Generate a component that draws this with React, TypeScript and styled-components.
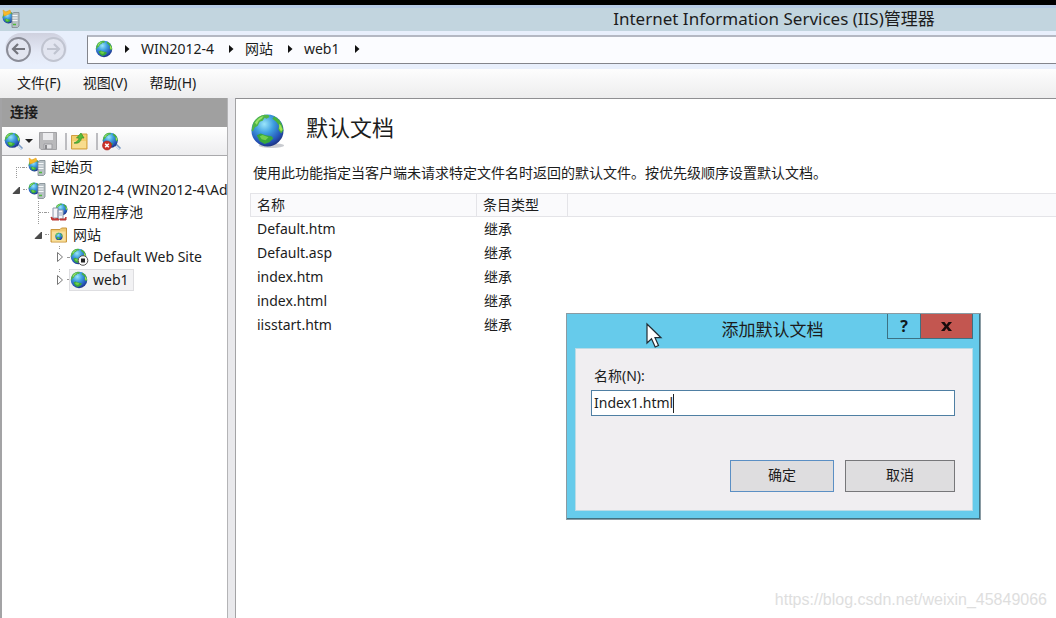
import React, { useId } from "react";
import styled, { createGlobalStyle, css } from "styled-components";

const GlobalStyle = createGlobalStyle`
  * { box-sizing: border-box; }
  body {
    margin: 0;
    background: #fff;
    color: #1c1c1c;
    font: 14px/20px "Noto Sans", "Noto Sans CJK SC", sans-serif;
  }
  button, input { font: inherit; color: inherit; }
  button { border: 0; padding: 0; background: none; white-space: nowrap; }
  svg { display: block; flex: none; overflow: visible; }
`;

const Page = styled.div`
  position: relative;
  min-height: 100vh;
  display: flex;
  flex-direction: column;
  border-top: 5px solid #000;
  overflow: hidden;
`;

const TitleBar = styled.header`
  height: 26px;
  display: flex;
  align-items: center;
  padding: 0 0 2px 2px;
  background: #c2d5df;
  border-top: 3px solid #b7cbe5;
`;

const AppTitle = styled.h1`
  flex: 1;
  margin: 0;
  padding-left: 472px;
  font-size: 17px;
  line-height: 20px;
  font-weight: 400;
  text-align: center;
  white-space: nowrap;
`;

const NavBar = styled.nav`
  height: 38px;
  display: flex;
  align-items: center;
  padding-bottom: 2px;
  background: #e8effc;
`;

const NavButtons = styled.div`
  display: flex;
  align-items: center;
  gap: 10px;
  width: 62px;
  height: 32px;
  margin: 0 20px 0 5px;
  padding-left: 1px;
  border-radius: 16px;
  background: linear-gradient(#cfd1df, #e4e9f6 60%, #e8effc);
`;

const RoundButton = styled.button<{ $dim?: boolean }>`
  width: 25px;
  height: 25px;
  display: grid;
  place-items: center;
  border-radius: 50%;
  border: 2px solid ${(p) => (p.$dim ? "#c0c4d0" : "#8b8d98")};
  color: ${(p) => (p.$dim ? "#c0c4d0" : "#74757d")};
  background: #e2e5f0;
`;

const AddressBar = styled.div`
  flex: 1;
  height: 29px;
  display: flex;
  align-items: center;
  gap: 11px;
  padding: 0 0 2px 7px;
  border: 1px solid #83858c;
  border-top: 2px solid #b4b8c3;
  border-right: 0;
  background: #fbfcff;
`;

const Crumb = styled.button`
  padding-right: 3px;
`;

const MenuBar = styled.div`
  height: 29px;
  display: flex;
  align-items: center;
  gap: 22px;
  padding: 0 0 2px 17px;
  background: linear-gradient(#fdfdfd, #ededee);
`;

const Body = styled.div`
  flex: 1;
  display: flex;
`;

const Sidebar = styled.aside`
  width: 228px;
  flex: none;
  border-left: 2px solid #a3a3a5;
  border-right: 1px solid #b4b4b6;
  background: #fff;
  overflow: hidden;
`;

const PanelTitle = styled.h2`
  margin: 0;
  padding: 4px 8px 5px;
  font-size: 14px;
  line-height: 20px;
  font-weight: 700;
  background: #a0a0a0;
`;

const ToolBar = styled.div`
  height: 29px;
  display: flex;
  align-items: center;
  padding-left: 2px;
  background: linear-gradient(#fff, #ededef);
  border-bottom: 1px solid #a9a9ac;
`;

const Divider = styled.span`
  width: 2px;
  height: 17px;
  margin: 0 4px 0 8px;
  background: #bcbcc0;
`;

const Caret = styled.span`
  margin: 0 6px 0 2px;
  border: 4px solid transparent;
  border-top-color: #222;
  border-bottom: 0;
`;

const Tree = styled.ul`
  height: 135px;
  margin: 0;
  padding: 0;
  list-style: none;
  display: grid;
  grid-auto-rows: 1fr;
`;

const TreeRow = styled.li<{ $level: number }>`
  display: flex;
  align-items: center;
  padding-left: ${(p) => 7 + p.$level * 22}px;
`;

const Joint = styled.span<{ $from: "middle" | "top" }>`
  align-self: stretch;
  width: 7px;
  margin-left: 7px;
  display: flex;
  align-items: center;
  border-left: 1px dotted #999;
  ${(p) =>
    p.$from === "middle" &&
    css`
      border-left: 0;
      background: repeating-linear-gradient(#999 0 1px, transparent 1px 2px) left bottom / 1px 50% no-repeat;
    `}
  &::before {
    content: "";
    flex: 1;
    border-top: 1px dotted #999;
  }
`;

const Toggle = styled.button<{ $stub?: boolean }>`
  align-self: stretch;
  width: 14px;
  display: grid;
  place-items: center;
  ${(p) =>
    p.$stub &&
    css`
      background: repeating-linear-gradient(#999 0 1px, transparent 1px 2px) 6px top / 1px 4px no-repeat;
    `}
`;

const Dash = styled.span<{ $short?: boolean }>`
  width: ${(p) => (p.$short ? 2 : 4)}px;
  flex: none;
  border-top: 1px dotted #999;
`;

const NodeButton = styled.button<{ $selected?: boolean }>`
  height: 22px;
  display: flex;
  align-items: center;
  gap: 5px;
  padding-right: 4px;
  border: 1px solid ${(p) => (p.$selected ? "#dedee1" : "transparent")};
  background: ${(p) => (p.$selected ? "#f2f2f4" : "transparent")};
`;

const Splitter = styled.div`
  width: 7px;
  flex: none;
  background: #e9e9ec;
`;

const Content = styled.main`
  flex: 1;
  min-width: 0;
  padding: 13px 0 0 14px;
  border-left: 1px solid #a3a3a5;
  border-top: 1px solid #8f8f92;
  background: #fff;
`;

const FeatureHead = styled.div`
  display: flex;
  align-items: center;
  gap: 21px;
  height: 36px;
`;

const FeatureTitle = styled.h2`
  margin: 0;
  padding-bottom: 6px;
  font-size: 22px;
  line-height: 30px;
  font-weight: 400;
`;

const Hint = styled.p`
  margin: 15px 0 10px 3px;
`;

const DocTable = styled.table`
  width: 100%;
  border-collapse: separate;
  border-spacing: 0;
  table-layout: fixed;
  th, td { height: 24px; padding: 0 0 0 7px; text-align: left; font-weight: 400; }
  th {
    padding-left: 6px;
    background: #fafafc;
    border: 1px solid #e4e4e8;
    border-left: 0;
  }
  th:first-child { border-left: 1px solid #e4e4e8; }
  th:last-child { border-right: 0; }
`;

const Col = styled.col<{ $w?: number }>`
  width: ${(p) => (p.$w ? `${p.$w}px` : "auto")};
`;

const Dialog = styled.section`
  position: absolute;
  left: 566px;
  top: 308px;
  width: 415px;
  padding: 0 6px 7px 8px;
  border: 1px solid #41707f;
  outline: 1px solid #8a9ba3;
  outline-offset: -1px;
  border-width: 1px 2px 2px 1px;
  background: #66cbeb;
`;

const DialogHead = styled.div`
  height: 34px;
  display: flex;
  align-items: flex-start;
`;

const DialogTitle = styled.h3`
  flex: 1;
  margin: 0;
  padding: 4px 0 0 83px;
  font-size: 17px;
  line-height: 24px;
  font-weight: 400;
  text-align: center;
`;

const CaptionButton = styled.button<{ $close?: boolean }>`
  width: ${(p) => (p.$close ? 53 : 33)}px;
  height: 25px;
  display: grid;
  place-items: center;
  font: 700 16px/20px "Open Sans", sans-serif;
  color: #10191d;
  border: 1px solid #3c7183;
  border-top: 0;
  border-right-width: ${(p) => (p.$close ? 1 : 0)}px;
  background: ${(p) => (p.$close ? "#c35650" : "#66cbeb")};
`;

const DialogForm = styled.form`
  display: flex;
  flex-direction: column;
  padding: 17px 17px 18px 15px;
  background: #f0eef1;
  border: 1px solid #b9dbe6;
`;

const FieldLabel = styled.label`
  padding: 0 0 4px 3px;
`;

const Field = styled.div`
  height: 26px;
  display: flex;
  align-items: center;
  padding-left: 2px;
  border: 1px solid #4f7fa3;
  background: #fff;
`;

const NameInput = styled.input`
  field-sizing: content;
  padding: 0;
  border: 0;
  outline: 0;
  background: none;
`;

const TextCursor = styled.span`
  width: 1px;
  height: 19px;
  background: #222;
`;

const Actions = styled.div`
  display: flex;
  justify-content: flex-end;
  gap: 11px;
  margin-top: 44px;
`;

const ActionButton = styled.button<{ $primary?: boolean }>`
  width: ${(p) => (p.$primary ? 104 : 110)}px;
  height: 32px;
  padding-bottom: 2px;
  border: 1px solid ${(p) => (p.$primary ? "#5b8fc4" : "#77777a")};
  background: #dedddf;
`;

const Pointer = styled.svg`
  position: absolute;
  left: 646px;
  top: 318px;
`;

const Watermark = styled.span`
  position: absolute;
  right: 9px;
  bottom: 8px;
  font: 16px/20px "Liberation Sans", sans-serif;
  color: #dedede;
`;

function GlobeShape() {
  const id = useId();
  return (
    <g>
      <defs>
        <radialGradient id={id} cx="0.4" cy="0.3" r="0.72">
          <stop offset="0" stopColor="#9be6fa" />
          <stop offset="0.4" stopColor="#3f9fe0" />
          <stop offset="0.8" stopColor="#2554b8" />
          <stop offset="1" stopColor="#1c3280" />
        </radialGradient>
      </defs>
      <circle cx="18" cy="18" r="16.5" fill={`url(#${id})`} />
      <path d="M2.500 13C4 7 9 2.500 15 1.700L19 2 20 4 17 6 15 5 13 8 10 9 8 13 5 15 3 19 1.700 18Z" fill="#4fb548" />
      <path d="M5 10Q8 4.500 14 3L12 6 9 8 7 12Z" fill="#9be26b" />
      <path d="M7 23L11 21 16 23 22 24 24 26 20 30 15 32 10 29Z" fill="#39a83c" />
      <path d="M10 24L13 22.500 19 25 16 28 12 27Z" fill="#72cf4c" />
      <path d="M25 3.300L30 7 33 12 34.300 18 32 21 29 17 30 13 27 9 23 6Z" fill="#48b23c" />
      <path d="M30 11L32 13 33.500 17 32 19 30 16Z" fill="#a5e554" />
    </g>
  );
}

function Globe({ size }: { size: number }) {
  return (
    <svg width={size} height={size} viewBox="0 0 36 36">
      <GlobeShape />
    </svg>
  );
}

function FeatureGlobe() {
  return (
    <svg width="35" height="35" viewBox="0 0 36 36">
      <ellipse cx="22" cy="33.5" rx="13" ry="2.5" fill="#c9cbd0" />
      <GlobeShape />
    </svg>
  );
}

function ServerIcon({ star }: { star?: boolean }) {
  return (
    <svg width="18" height="18" viewBox="0 0 18 18">
      <g transform="translate(0 1) scale(.36)"><GlobeShape /></g>
      {star && <path d="M1 0L4 2 8 0 9 3 5 5 2 6Z" fill="#f7b928" stroke="#e59b18" strokeWidth=".5" />}
      <path d="M10 3.500L12 2.500H17V16L15.500 17.500H10Z" fill="#b8c1c6" stroke="#7c888e" strokeWidth=".8" />
      <path d="M10.500 5.500H15.500M10.500 8H15.500M10.500 10.500H15.500" stroke="#f5f8f9" strokeWidth="1.200" />
      <path d="M11 14.500H14" stroke="#4fbb3a" strokeWidth="1.500" />
    </svg>
  );
}

function PoolIcon() {
  return (
    <svg width="18" height="18" viewBox="0 0 18 18">
      <g transform="translate(5 0) scale(.36)"><GlobeShape /></g>
      <path d="M3 5H8V15H3ZM8 7H13V16H8Z" fill="#f5f6fa" stroke="#8d96a8" />
      <path d="M9 10H12M9 12H12" stroke="#9aa8c6" />
      <path d="M1 14L4 16 8 15.500 9 17H2ZM10 16H15L16 14V17H10Z" fill="#cf3c3a" stroke="#b83734" />
    </svg>
  );
}

function SitesIcon() {
  return (
    <svg width="18" height="18" viewBox="0 0 18 18">
      <path d="M1 3.500H10L11.500 2H16.500V16H1Z" fill="#f0cb73" stroke="#c9963c" />
      <path d="M2 5.500H15.500V15.500H2Z" fill="#f8df9d" />
      <g transform="translate(5 6.500) scale(.22)"><GlobeShape /></g>
    </svg>
  );
}

function StoppedSiteIcon() {
  return (
    <svg width="18" height="18" viewBox="0 0 18 18">
      <g transform="scale(.47)"><GlobeShape /></g>
      <circle cx="13" cy="12.5" r="4.800" fill="#fafafa" stroke="#555" />
      <rect x="11" y="10.5" width="4" height="4" fill="#222" />
    </svg>
  );
}

function ConnectIcon({ blocked }: { blocked?: boolean }) {
  return (
    <svg width="19" height="19" viewBox="0 0 19 19">
      <path d="M12 11L18 17" stroke="#7a9bc4" strokeWidth="3" />
      <path d="M14 14L17.500 17.500" stroke="#dce7f5" strokeWidth="1.500" />
      <g transform="scale(.46)"><GlobeShape /></g>
      {blocked && (
        <g>
          <circle cx="5" cy="13.500" r="4.500" fill="#cc3029" stroke="#a7221e" strokeWidth=".6" />
          <path d="M3.200 11.700L6.800 15.300M6.800 11.700L3.200 15.300" stroke="#fff" strokeWidth="1.500" />
        </g>
      )}
    </svg>
  );
}

function SaveIcon() {
  return (
    <svg width="18" height="18" viewBox="0 0 18 18">
      <path d="M.5 .5H17.500V17.500H2L.5 16Z" fill="#b9b9bb" stroke="#a2a2a5" />
      <path d="M4 1H14V8H4Z" fill="#ececee" />
      <path d="M5 12H13V17H5Z" fill="#e2e2e4" stroke="#9c9ca0" />
      <path d="M7 13V17" stroke="#88888c" strokeWidth="2" />
    </svg>
  );
}

function FolderUpIcon() {
  return (
    <svg width="17" height="18" viewBox="0 0 17 18">
      <path d="M.5 3.500H9L10.500 2H16V17H.5Z" fill="#f3cd6b" stroke="#d19f40" />
      <path d="M1.500 9H15V16H1.500Z" fill="#f8dc8d" />
      <path d="M3 11C6 10 8 8 8 6H5.500L10 1 13 6H10.500C10 10 7 12 3 11Z" fill="#56bb39" stroke="#398e27" strokeWidth=".7" />
    </svg>
  );
}

function NavArrow({ flip }: { flip?: boolean }) {
  return (
    <svg width="13" height="12" viewBox="0 0 13 12" fill="none" stroke="currentColor" strokeWidth="2.200">
      <path d={flip ? "M0 6H12M7 1L12 6 7 11" : "M13 6H1M6 1L1 6 6 11"} />
    </svg>
  );
}

function CrumbArrow() {
  return (
    <svg width="6" height="8" viewBox="0 0 6 8">
      <path d="M1 0L5.500 4 1 8Z" fill="#111" />
    </svg>
  );
}

function ToggleMark({ open }: { open?: boolean }) {
  return (
    <svg width="8" height="10" viewBox="0 0 8 10">
      {open ? (
        <path d="M7.500 2V8.500H1Z" fill="#4a4a4a" stroke="#333" strokeWidth=".8" />
      ) : (
        <path d="M1.500 .5L6.500 5 1.500 9.500Z" fill="#fff" stroke="#777" />
      )}
    </svg>
  );
}

type TreeNode = {
  label: string;
  level: number;
  icon: React.ReactNode;
  joint?: "middle" | "top";
  open?: boolean;
  selected?: boolean;
};

const nodes: TreeNode[] = [
  { label: "起始页", level: 0, icon: <ServerIcon star />, joint: "middle" },
  { label: "WIN2012-4 (WIN2012-4\\Administrator)", level: 0, icon: <ServerIcon />, open: true },
  { label: "应用程序池", level: 1, icon: <PoolIcon />, joint: "top" },
  { label: "网站", level: 1, icon: <SitesIcon />, open: true },
  { label: "Default Web Site", level: 2, icon: <StoppedSiteIcon /> },
  { label: "web1", level: 2, icon: <Globe size={18} />, selected: true },
];

const crumbs = ["WIN2012-4", "网站", "web1"];
const menus = ["文件(F)", "视图(V)", "帮助(H)"];
const documents = ["Default.htm", "Default.asp", "index.htm", "index.html", "iisstart.htm"];

export default function App() {
  return (
    <>
      <GlobalStyle />
      <Page>
        <TitleBar>
          <ServerIcon star />
          <AppTitle>Internet Information Services (IIS)管理器</AppTitle>
        </TitleBar>
        <NavBar>
          <NavButtons>
            <RoundButton aria-label="后退"><NavArrow /></RoundButton>
            <RoundButton $dim aria-label="前进"><NavArrow flip /></RoundButton>
          </NavButtons>
          <AddressBar>
            <Globe size={18} />
            <CrumbArrow />
            {crumbs.map((c) => (
              <React.Fragment key={c}>
                <Crumb>{c}</Crumb>
                <CrumbArrow />
              </React.Fragment>
            ))}
          </AddressBar>
        </NavBar>
        <MenuBar>
          {menus.map((m) => <button key={m}>{m}</button>)}
        </MenuBar>
        <Body>
          <Sidebar>
            <PanelTitle>连接</PanelTitle>
            <ToolBar>
              <button aria-label="连接"><ConnectIcon /></button>
              <Caret />
              <button aria-label="保存"><SaveIcon /></button>
              <Divider />
              <button aria-label="向上"><FolderUpIcon /></button>
              <Divider />
              <button aria-label="断开"><ConnectIcon blocked /></button>
            </ToolBar>
            <Tree>
              {nodes.map((n) => (
                <TreeRow key={n.label} $level={n.level}>
                  {n.joint ? (
                    <Joint $from={n.joint} />
                  ) : (
                    <Toggle $stub={n.level === 2} aria-label={n.label}><ToggleMark open={n.open} /></Toggle>
                  )}
                  <Dash $short={n.level === 2} />
                  <NodeButton $selected={n.selected}>
                    {n.icon}
                    {n.label}
                  </NodeButton>
                </TreeRow>
              ))}
            </Tree>
          </Sidebar>
          <Splitter />
          <Content>
            <FeatureHead>
              <FeatureGlobe />
              <FeatureTitle>默认文档</FeatureTitle>
            </FeatureHead>
            <Hint>使用此功能指定当客户端未请求特定文件名时返回的默认文件。按优先级顺序设置默认文档。</Hint>
            <DocTable>
              <colgroup>
                <Col $w={227} />
                <Col $w={91} />
                <Col />
              </colgroup>
              <thead>
                <tr>
                  <th>名称</th>
                  <th>条目类型</th>
                  <th />
                </tr>
              </thead>
              <tbody>
                {documents.map((d) => (
                  <tr key={d}>
                    <td>{d}</td>
                    <td>继承</td>
                    <td />
                  </tr>
                ))}
              </tbody>
            </DocTable>
          </Content>
        </Body>
        <Dialog role="dialog" aria-labelledby="dialog-title">
          <DialogHead>
            <DialogTitle id="dialog-title">添加默认文档</DialogTitle>
            <CaptionButton>?</CaptionButton>
            <CaptionButton $close aria-label="关闭">
              <svg width="11" height="9" viewBox="0 0 11 9">
                <path d="M0 0H3.500L5.500 2.700 7.500 0H11L7.300 4.500 11 9H7.500L5.500 6.300 3.500 9H0L3.700 4.500Z" fill="#190c0c" />
              </svg>
            </CaptionButton>
          </DialogHead>
          <DialogForm onSubmit={(e) => e.preventDefault()}>
            <FieldLabel htmlFor="doc-name">名称(N):</FieldLabel>
            <Field>
              <NameInput id="doc-name" defaultValue="Index1.html" />
              <TextCursor />
            </Field>
            <Actions>
              <ActionButton $primary type="submit">确定</ActionButton>
              <ActionButton type="button">取消</ActionButton>
            </Actions>
          </DialogForm>
        </Dialog>
        <Pointer width="16" height="26" viewBox="0 0 16 26">
          <path d="M1 1V20L5.500 15.800 9.200 24 12.500 22.500 9 14.700H15Z" fill="#fff" stroke="#222c33" strokeWidth="1.200" />
        </Pointer>
        <Watermark>https://blog.csdn.net/weixin_45849066</Watermark>
      </Page>
    </>
  );
}
